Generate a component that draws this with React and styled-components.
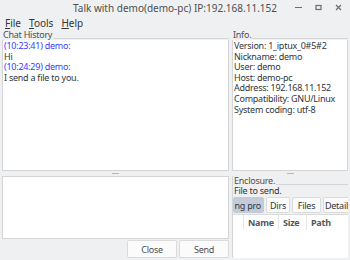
import React from 'react';
import styled, { createGlobalStyle } from 'styled-components';

const GlobalStyle = createGlobalStyle`
  html, body {
    margin: 0;
    padding: 0;
    background: #eff0f1;
    font-family: "Noto Sans", "DejaVu Sans", sans-serif;
    font-size: 9px;
    letter-spacing: -0.25px;
    color: #31363b;
  }
`;

const Window = styled.div`
  width: 350px;
  height: 260px;
  display: flex;
  flex-direction: column;
  background: #eff0f1;
  overflow: hidden;
`;

const TitleBar = styled.div`
  height: 15px;
  display: flex;
  align-items: center;
  position: relative;
  justify-content: center;
  font-size: 10px;
  letter-spacing: 0;
  color: #4d4f52;
`;

const Controls = styled.div`
  position: absolute;
  right: 8px;
  top: 4px;
  display: flex;
  gap: 13px;
  align-items: center;
`;

const MenuBar = styled.div`
  height: 15px;
  display: flex;
  align-items: center;
  gap: 8px;
  padding-left: 5px;
  font-size: 10px;
  letter-spacing: 0;
`;

const MenuItem = styled.span`
  color: #31363b;
  u { text-decoration: underline; }
`;

const Body = styled.div`
  flex: 1;
  display: flex;
  gap: 3px;
  padding: 0 2px 2px 2px;
  min-height: 0;
`;

const Column = styled.div`
  width: ${(p) => p.$w}px;
  display: flex;
  flex-direction: column;
  min-height: 0;
`;

const Legend = styled.div`
  display: flex;
  align-items: center;
  height: 10px;
  line-height: 10px;
  color: #4d4f52;
  span { padding: 0 1px; }
  &::after {
    content: '';
    flex: 1;
    border-top: 1px solid #d4d5d6;
    margin-top: 6px;
  }
`;

const Pane = styled.div`
  background: #fff;
  border: 1px solid #d4d5d6;
  border-top: none;
  height: ${(p) => p.$h}px;
  padding: 1px 1px;
  line-height: 10.6px;
  box-sizing: border-box;
  white-space: nowrap;
  overflow: hidden;
`;

const Stamp = styled.div`
  color: #3a3aff;
`;

const Handle = styled.div`
  height: 5px;
  display: flex;
  justify-content: center;
  align-items: center;
  &::before {
    content: '';
    width: 7px;
    height: 1px;
    background-image: radial-gradient(circle, #b5b7b9 0.6px, transparent 0.7px);
    background-size: 2px 1px;
  }
`;

const InputBox = styled.div`
  flex: 1;
  background: #fff;
  border: 1px solid #d4d5d6;
`;

const ButtonRow = styled.div`
  height: 18px;
  display: flex;
  justify-content: flex-end;
  gap: 2px;
  padding-top: 1px;
  background: #eff0f1;
`;

const Button = styled.button`
  width: 50px;
  height: 18px;
  box-sizing: border-box;
  border: 1px solid #dadbdc;
  background: #fbfbfb;
  border-radius: 2px;
  font: inherit;
  letter-spacing: inherit;
  color: #4d4f52;
  padding: 0;
`;

const EncFrame = styled.div`
  flex: 1;
  display: flex;
  flex-direction: column;
  border-left: 1px solid #d4d5d6;
  min-height: 0;
`;

const SubLegend = styled.div`
  padding-left: 1px;
  height: 10px;
  line-height: 10px;
  color: #31363b;
`;

const Tabs = styled.div`
  display: flex;
  gap: 2px;
  margin-top: 1px;
  height: 16px;
  overflow: hidden;
`;

const Tab = styled.div`
  flex: none;
  width: ${(p) => p.$w}px;
  height: 16px;
  box-sizing: border-box;
  display: flex;
  align-items: center;
  justify-content: ${(p) => (p.$clip ? 'flex-end' : 'center')};
  padding-right: ${(p) => (p.$clip ? 2 : 0)}px;
  overflow: hidden;
  white-space: nowrap;
  border: 1px solid ${(p) => (p.$active ? '#c3cbd8' : '#dadbdc')};
  background: ${(p) => (p.$active ? '#c3cbd8' : '#fbfbfb')};
  border-radius: 2px;
  color: #31363b;
`;

const TableArea = styled.div`
  flex: 1;
  background: #fff;
  border-top: 1px solid #dadbdc;
  margin-top: 1px;
`;

const HeaderRow = styled.div`
  display: flex;
  height: 15px;
  align-items: center;
  font-weight: bold;
  color: #555759;
`;

const HeadCell = styled.div`
  width: ${(p) => p.$w}px;
  box-sizing: border-box;
  padding-left: ${(p) => p.$pl || 4}px;
  border-left: ${(p) => (p.$sep ? '1px solid #e4e5e6' : 'none')};
  height: 15px;
  line-height: 15px;
`;

const Minimize = () => (
  <svg width="7" height="7" viewBox="0 0 7 7">
    <path d="M0 3.5h7" stroke="#6b6d70" strokeWidth="1" />
  </svg>
);
const Maximize = () => (
  <svg width="7" height="7" viewBox="0 0 7 7">
    <rect x="1" y="1.5" width="5" height="4" fill="none" stroke="#6b6d70" strokeWidth="1.2" />
  </svg>
);
const CloseIcon = () => (
  <svg width="7" height="7" viewBox="0 0 7 7">
    <path d="M1 1l5 5M6 1l-5 5" stroke="#6b6d70" strokeWidth="1.2" />
  </svg>
);

const info = [
  'Version: 1_iptux_0#5#2',
  'Nickname: demo',
  'User: demo',
  'Host: demo-pc',
  'Address: 192.168.11.152',
  'Compatibility: GNU/Linux',
  'System coding: utf-8',
];

export default function App() {
  return (
    <Window>
      <GlobalStyle />
      <TitleBar>
        Talk with demo(demo-pc) IP:192.168.11.152
        <Controls>
          <Minimize />
          <Maximize />
          <CloseIcon />
        </Controls>
      </TitleBar>
      <MenuBar>
        <MenuItem><u>F</u>ile</MenuItem>
        <MenuItem><u>T</u>ools</MenuItem>
        <MenuItem><u>H</u>elp</MenuItem>
      </MenuBar>
      <Body>
        <Column $w={227}>
          <Legend><span>Chat History</span></Legend>
          <Pane $h={131}>
            <Stamp>(10:23:41) demo:</Stamp>
            <div>Hi</div>
            <Stamp>(10:24:29) demo:</Stamp>
            <div>I send a file to you.</div>
          </Pane>
          <Handle />
          <InputBox />
          <ButtonRow>
            <Button>Close</Button>
            <Button>Send</Button>
          </ButtonRow>
        </Column>
        <Column $w={116}>
          <Legend><span>Info.</span></Legend>
          <Pane $h={131}>
            {info.map((l) => (
              <div key={l}>{l}</div>
            ))}
          </Pane>
          <Handle />
          <EncFrame>
            <Legend><span>Enclosure.</span></Legend>
            <SubLegend>File to send.</SubLegend>
            <Tabs>
              <Tab $w={31} $active $clip>ng pro</Tab>
              <Tab $w={24}>Dirs</Tab>
              <Tab $w={29}>Files</Tab>
              <Tab $w={27}>Detail</Tab>
            </Tabs>
            <TableArea>
              <HeaderRow>
                <HeadCell $w={10} $pl={0} />
                <HeadCell $w={35} $sep>Name</HeadCell>
                <HeadCell $w={28} $sep>Size</HeadCell>
                <HeadCell $w={40} $sep>Path</HeadCell>
              </HeaderRow>
            </TableArea>
          </EncFrame>
        </Column>
      </Body>
    </Window>
  );
}
